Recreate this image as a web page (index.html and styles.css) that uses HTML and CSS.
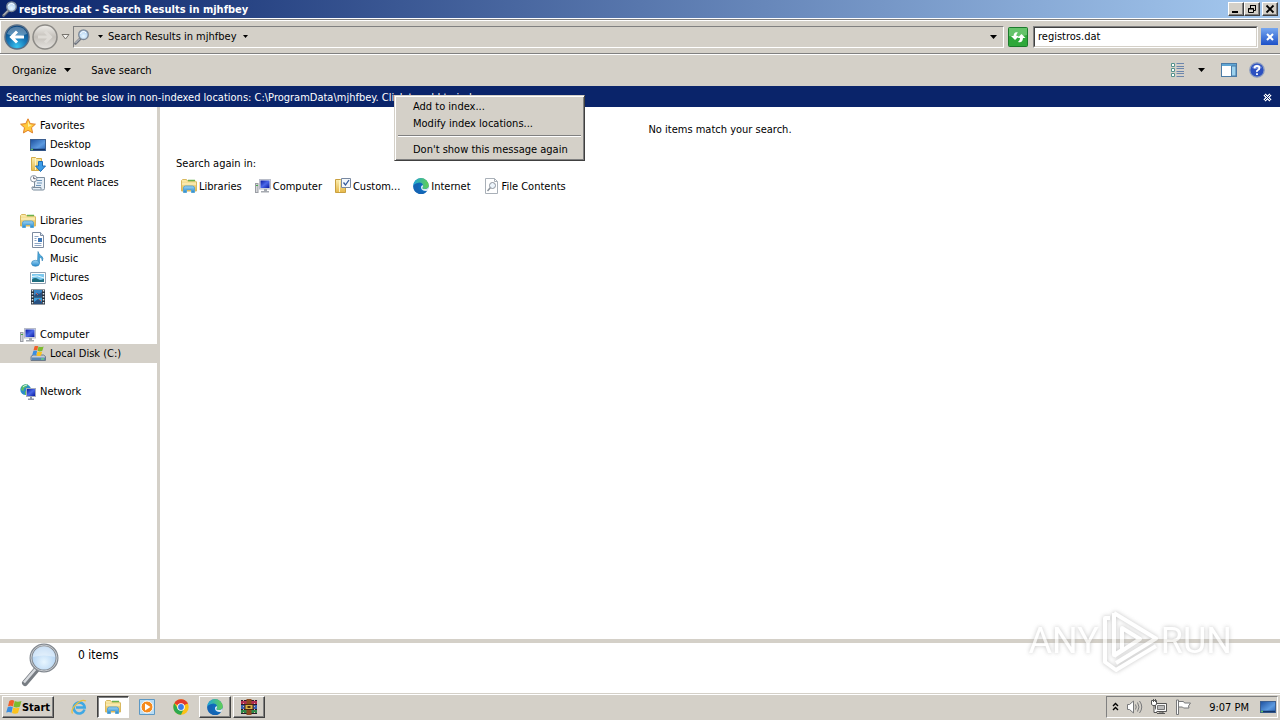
FILE: index.html
```
<!DOCTYPE html>
<html lang="en">
<head>
    <meta charset="UTF-8">
    <meta name="viewport" content="width=device-width, initial-scale=1.0">
    <title>registros.dat - Search Results in mjhfbey</title>
    <link rel="stylesheet" href="styles.css">
</head>
<body>
    <!-- icons used more than once -->
    <svg class="defs" width="0" height="0" aria-hidden="true">
        <defs>
            <linearGradient id="gFolder" x1="0" y1="0" x2="0" y2="1"><stop offset="0" stop-color="#fbeeb0"/><stop offset="1" stop-color="#e6b84a"/></linearGradient>
            <linearGradient id="gBlue" x1="0" y1="0" x2="0" y2="1"><stop offset="0" stop-color="#9ed4f4"/><stop offset="1" stop-color="#2388cc"/></linearGradient>
            <linearGradient id="gScreen" x1="0" y1="0" x2="1" y2="1"><stop offset="0" stop-color="#0818a0"/><stop offset=".5" stop-color="#4a68e8"/><stop offset="1" stop-color="#0818a0"/></linearGradient>
            <linearGradient id="gDesk" x1="0" y1="0" x2="1" y2="1"><stop offset="0" stop-color="#1c4f9e"/><stop offset=".6" stop-color="#5c9ae0"/><stop offset="1" stop-color="#2860b0"/></linearGradient>
            <linearGradient id="gEdge" x1="0" y1="0" x2="1" y2="0"><stop offset="0" stop-color="#1ea4dc"/><stop offset="1" stop-color="#62d050"/></linearGradient>
            <radialGradient id="gLens" cx=".5" cy=".65" r=".6"><stop offset="0" stop-color="#e8f6ff"/><stop offset="1" stop-color="#a8ccf0"/></radialGradient>
            <radialGradient id="gBack" cx=".5" cy=".9" r=".8"><stop offset="0" stop-color="#38c4f0"/><stop offset=".5" stop-color="#1878b8"/><stop offset="1" stop-color="#0c4880"/></radialGradient>
            <linearGradient id="gFwd" x1="0" y1="0" x2="0" y2="1"><stop offset="0" stop-color="#f0eeea"/><stop offset=".5" stop-color="#c4c0ba"/><stop offset="1" stop-color="#e6e4e0"/></linearGradient>
        </defs>
        <symbol id="lens" viewBox="0 0 16 16">
            <path d="M6.500 9.500L1.500 14.500" stroke="#70757e" stroke-width="2.600" stroke-linecap="round"/>
            <path d="M6 9.500L1.500 14" stroke="#d0d4da" stroke-width="1"/>
            <circle cx="9.500" cy="5.700" r="4.800" fill="url(#gLens)" stroke="#7d8896" stroke-width="1.300"/>
            <path d="M6.500 5a3 3 0 0 1 5.500-1" fill="none" stroke="#fff"/>
        </symbol>
        <symbol id="libraries" viewBox="0 0 16 16">
            <path d="M.5 13V2.500l1-1h4l1 1.500h8l1 1V13z" fill="url(#gFolder)" stroke="#d8b860"/>
            <path d="M7 2.500h7" stroke="#6bb04c" stroke-width="1.500"/>
            <path d="M1 6h14" stroke="#fff7cf"/>
            <path d="M2.500 14.500V10q0-2 2-2h7q2 0 2 2v4.500h-3V11.500h-5v3z" fill="url(#gBlue)" stroke="#58a4d4"/>
        </symbol>
        <symbol id="computer" viewBox="0 0 16 16">
            <rect x=".5" y="5.500" width="2.500" height="9" fill="#d4d6da" stroke="#9a9da4"/>
            <path d="M1 7.500h2" stroke="#48a848"/>
            <rect x="4.500" y="1.500" width="11" height="9.500" fill="#dfe3ea" stroke="#b8bcc8"/>
            <rect x="5.500" y="2.500" width="9" height="7.500" fill="url(#gScreen)"/>
            <path d="M9 11h3v2h2v1.500H6V13h3z" fill="#a5a9b0"/>
        </symbol>
        <symbol id="desktop" viewBox="0 0 16 16">
            <rect x=".5" y="2.500" width="15" height="11" fill="url(#gDesk)" stroke="#3c5f90"/>
            <path d="M1 12.500h14" stroke="#123468" stroke-width="1.500"/>
            <path d="M1 12.500h2" stroke="#60c060" stroke-width="1.500"/>
        </symbol>
        <symbol id="edge" viewBox="0 0 16 16">
            <circle cx="8" cy="8" r="7.700" fill="#0f6cbd"/>
            <path d="M.3 8A7.700 7.700 0 0 1 15.700 7.500c0 2.500-2 3.500-4 3.500-2 0-3-.8-2-1.800C11 6 8 4.200 5.500 4.700 2.800 5 1 6.500.3 8z" fill="url(#gEdge)"/>
            <path d="M.3 8C1 6 4 4.700 6.500 6c-2.500 2-1.500 6.500 2.500 7.800 2 .6 4 0 5.300-1A7.700 7.700 0 0 1 .3 8z" fill="#1464b4"/>
            <path d="M9.700 9.200c-1 1 0 1.800 2 1.800 1.500 0 3-.5 3.800-1.800q0 2-1.200 3.500c-3 1-6.300-.7-6.300-3.200 0-1.500 1-2.500 1.900-2.200q.5.900-.2 1.900z" fill="#fff" fill-opacity=".85"/>
        </symbol>
        <symbol id="flag" viewBox="0 0 16 16">
            <path d="M3.300 2Q6 0 8.200 1.800L7 7.400Q5 6 2 7.200z" fill="#f0602a"/>
            <path d="M8.700 2Q11.500 3.600 15.500 2l-1.700 5.700Q10 9.300 7.500 7.700z" fill="#7cbb2e"/>
            <path d="M1.800 8Q4.800 6.800 6.800 8.200l-1.300 5.600Q3.300 12.300.2 13.500z" fill="#3a8ee0"/>
            <path d="M7.300 8.500q2.500 1.500 6.300 0l-1.600 5.600q-3 1.400-6-.1z" fill="#fbc21c"/>
        </symbol>
        <symbol id="down" viewBox="0 0 7 4"><path d="M0 0h7L3.500 4z" fill="currentColor"/></symbol>
    </svg>

    <header class="titlebar">
        <svg class="icon"><use href="#lens"/></svg>
        <h1>registros.dat - Search Results in mjhfbey</h1>
        <div class="window-buttons">
            <button aria-label="Minimize"><svg width="10" height="10"><path d="M1 8h6" stroke="#000" stroke-width="2"/></svg></button>
            <button aria-label="Restore"><svg width="10" height="10" fill="none" stroke="#000"><path d="M3.500 4V1.500h5v5H7M3 1.500h6M1.500 4.500h5v4h-5zM1 5h6"/></svg></button>
            <button class="close" aria-label="Close"><svg width="10" height="10"><path d="M1.500 1.500l7 7M8.500 1.500l-7 7" stroke="#000" stroke-width="1.800"/></svg></button>
        </div>
    </header>

    <nav class="navbar">
        <button class="round" aria-label="Back">
            <svg width="26" height="26" viewBox="0 0 26 26"><circle cx="13" cy="13" r="12" fill="url(#gBack)" stroke="#5a6f86" stroke-width="1.500"/><path d="M3 10a10.500 10.500 0 0 1 20 0q-10 4-20 0z" fill="#fff" opacity=".3"/><path d="M20 13H8M13 7.500L7.500 13l5.500 5.500" fill="none" stroke="#fff" stroke-width="3"/></svg>
        </button>
        <button class="round" aria-label="Forward">
            <svg width="26" height="26" viewBox="0 0 26 26"><circle cx="13" cy="13" r="12" fill="url(#gFwd)" stroke="#8c8a86" stroke-width="1.500"/><path d="M6 13h12M13 7.500l5.500 5.500-5.500 5.500" fill="none" stroke="#dedbd6" stroke-width="3"/></svg>
        </button>
        <button class="history" aria-label="Recent pages"><svg width="9" height="6"><path d="M1 .5h7L4.500 5z" fill="#f4f2ee" stroke="#77746e"/></svg></button>
        <div class="address">
            <svg class="icon"><use href="#lens"/></svg>
            <button aria-label="Locations"><svg class="arrow"><use href="#down"/></svg></button>
            <button class="crumb">Search Results in mjhfbey <svg class="arrow"><use href="#down"/></svg></button>
            <button class="previous" aria-label="Previous locations"><svg class="arrow-big"><use href="#down"/></svg></button>
        </div>
        <button class="refresh" aria-label="Refresh">
            <svg width="20" height="20" viewBox="0 0 20 20"><rect x=".5" y=".5" width="19" height="19" rx="1" fill="#2fa83a" stroke="#1c7a2c"/><path d="M1 1h18v7Q10 11 1 9z" fill="#8ad68a" opacity=".6"/><path d="M10 5.500Q6 4 5.500 9H3l4 4 4-4H8.500Q8 7 10 5.500z" fill="#fff"/><path d="M10 15q4.500 1.500 5-4h2.500l-4-4-4 4H12q.3 2.500-2 4z" fill="#fff"/></svg>
        </button>
        <div class="search">
            <input type="text" value="registros.dat" aria-label="Search">
        </div>
        <button class="clear" aria-label="Clear search"><svg width="10" height="10"><path d="M2 2l6 6M8 2L2 8" stroke="#fff" stroke-width="2"/></svg></button>
    </nav>

    <div class="toolbar">
        <button>Organize <svg class="arrow-big"><use href="#down"/></svg></button>
        <button>Save search</button>
        <div class="view-buttons">
            <button aria-label="Change your view"><svg width="16" height="16" fill="none"><path d="M1.500 1.500h3v3h-3zM1.500 6.500h3v3h-3zM1.500 11.500h3v3h-3z" fill="#fff" stroke="#54928c"/><path d="M6.500 1.500H14M6.500 4.500H14M6.500 6.500H14M6.500 9.500H14M6.500 11.500H14M6.500 14.500H14" stroke="#6c86ac"/></svg></button>
            <button aria-label="More views"><svg class="arrow-big"><use href="#down"/></svg></button>
            <button class="preview" aria-label="Show the preview pane"><svg width="16" height="16"><rect x=".5" y="1.500" width="15" height="13" fill="#fff" stroke="#4b7ba6"/><path d="M1 3h14" stroke="#5fa6d4" stroke-width="2"/><path d="M10.500 4h4.500v10h-4.500z" fill="#9cd2ee" stroke="#4b7ba6"/></svg></button>
            <button aria-label="Get help"><svg width="16" height="16"><circle cx="8" cy="8" r="7.200" fill="#2c50c0" stroke="#8b9cc0" stroke-width="1.300"/><path d="M3 6a5.500 5.500 0 0 1 10 0q-5 2-10 0z" fill="#a8bcf0" opacity=".5"/><path d="M5.500 6.300Q5.700 4 8 4t2.400 2Q10.500 7.300 9 8T8 10M8 11.200v1.700" fill="none" stroke="#fff" stroke-width="1.800"/></svg></button>
        </div>
    </div>

    <div class="infobar">
        <a href="#index">Searches might be slow in non-indexed locations: C:\ProgramData\mjhfbey. Click to add to index...</a>
        <button aria-label="Close message"><svg width="9" height="9" viewBox="0 0 9 9"><path d="M1.500 1.500l6 6M7.500 1.500l-6 6" stroke="#fff" stroke-width="3"/><path d="M1.500 1.500l6 6M7.500 1.500l-6 6" stroke="#0a246a" stroke-width="1"/></svg></button>
        <div class="menu" role="menu">
            <button role="menuitem">Add to index...</button>
            <button role="menuitem">Modify index locations...</button>
            <hr>
            <button role="menuitem">Don't show this message again</button>
        </div>
    </div>

    <div class="content">
        <aside class="sidebar">
            <ul>
                <li><a href="#favorites"><svg class="icon" viewBox="0 0 16 16"><path d="M8 .8l2.200 4.800 5.200.6-3.900 3.500 1.100 5.200L8 12.300l-4.600 2.600 1.100-5.200L.6 6.200l5.200-.6z" fill="#ffc93c" stroke="#e0812a"/><path d="M8 3l1.300 3.500L12 7 8 9z" fill="#fff2a0"/></svg>Favorites</a></li>
                <li class="sub"><a href="#desktop"><svg class="icon"><use href="#desktop"/></svg>Desktop</a></li>
                <li class="sub"><a href="#downloads"><svg class="icon" viewBox="0 0 16 16"><path d="M1.500 14.500V1.500h4l1 1h5v12z" fill="url(#gFolder)" stroke="#d4ac48"/><path d="M5.500 2v12" stroke="#fff4c4"/><path d="M8.500 5.500h4v4.500h3l-5 5.500-5-5.500h3z" fill="#3c9ce8" stroke="#1e6cb4"/></svg>Downloads</a></li>
                <li class="sub"><a href="#recent"><svg class="icon" viewBox="0 0 16 16"><path d="M4.500 2.500h10v11q0 1.500-1.500 1.500H3.500Q2 15 2 13v-1h2.500z" fill="#e4edf5" stroke="#7b8c9c"/><path d="M7 5.500h5M7 8h5M6 10.500h5" stroke="#6d94b8"/><path d="M3 12.500h8v2" fill="none" stroke="#7b8c9c"/><circle cx="3.700" cy="3.700" r="3.200" fill="#fff" stroke="#8794a2"/><path d="M3.700 1.500v2.200h2" fill="none" stroke="#556"/></svg>Recent Places</a></li>
            </ul>
            <ul>
                <li><a href="#libraries"><svg class="icon"><use href="#libraries"/></svg>Libraries</a></li>
                <li class="sub"><a href="#documents"><svg class="icon" viewBox="0 0 16 16"><path d="M2.500.5h8l3 3v12h-11z" fill="#fff" stroke="#7d8ba0"/><path d="M10.500.5v3h3" fill="#d8e2ee" stroke="#7d8ba0"/><path d="M4.500 4.500h4M4.500 6.500h2M4.500 8.500h2M4.500 11.500h7M4.500 13.500h7" stroke="#8fa6c4"/><path d="M8 6h4v4H8z" fill="#3f78b8"/></svg>Documents</a></li>
                <li class="sub"><a href="#music"><svg class="icon" viewBox="0 0 16 16"><path d="M8 .5q1 3.500 3.500 4.500 2.500 2 .8 5Q12.500 7 9.500 6v6h-2z" fill="#4aa8dc" stroke="#2d7fb4" stroke-width=".6"/><ellipse cx="5.500" cy="12.300" rx="4" ry="3" fill="url(#gBlue)" stroke="#2d7fb4" stroke-width=".6"/></svg>Music</a></li>
                <li class="sub"><a href="#pictures"><svg class="icon" viewBox="0 0 16 16"><path d="M.5 2.500h15v11H.5z" fill="#fff" stroke="#92a2b2"/><path d="M2 4h12v8H2z" fill="#7cc8ee"/><path d="M2 9.500Q5 7 8 9t6-.5V12H2z" fill="#1f6f80"/><path d="M2 6.500q5-2 12 1.500" fill="none" stroke="#e6f7fd"/></svg>Pictures</a></li>
                <li class="sub"><a href="#videos"><svg class="icon" viewBox="0 0 16 16"><path d="M1 .5h14v15H1z" fill="#26303c"/><path d="M4 1h8v6.500H4z" fill="#3984c4"/><path d="M4 8.500h8V15H4z" fill="#3c9cd8"/><path d="M4 7q3-4 5-2l3-2v4.500H4zM4 13l4-3 4 3v2H4z" fill="#285080"/><path d="M2.500 1v14M13.500 1v14" stroke="#dfe6ec" stroke-width="1.500" stroke-dasharray="1.500 1.500"/><path d="M6 4l2 2M9 10l2 2" stroke="#c86060"/></svg>Videos</a></li>
            </ul>
            <ul>
                <li><a href="#computer"><svg class="icon"><use href="#computer"/></svg>Computer</a></li>
                <li class="sub selected"><a href="#disk"><svg class="icon" viewBox="0 0 16 16"><path d="M1 10.500l2-1.500h10.500l2 1.500v4H1z" fill="#c4ccd6" stroke="#6d7a8a"/><path d="M1.500 11.500h13.500v2.500H1.500z" fill="#5a87b4"/><path d="M11 13h3" stroke="#6cf06c"/><svg x="2" y="-1" width="12" height="12"><use href="#flag"/></svg></svg>Local Disk (C:)</a></li>
            </ul>
            <ul>
                <li><a href="#network"><svg class="icon" viewBox="0 0 16 16"><circle cx="5.700" cy="5.700" r="5.400" fill="#2c8cc8"/><path d="M2 2q3-2.500 6-1.500L6.500 3 4 4 3.500 7 1 6zM5 7l3 1-1 3H5z" fill="#5cc060"/><path d="M3 3q2-2 4-2" stroke="#c9f0ff" fill="none"/><rect x="6.500" y="4.500" width="9" height="8" fill="#dfe3ea" stroke="#a5acbc"/><path d="M7 5h8v7H7z" fill="url(#gScreen)"/><path d="M10 13h2v1.500h2V16H8v-1.500h2z" fill="#9098a8"/></svg>Network</a></li>
            </ul>
        </aside>
        <main class="results">
            <p class="empty">No items match your search.</p>
            <p>Search again in:</p>
            <div class="again">
                <a href="#libraries"><svg class="icon"><use href="#libraries"/></svg>Libraries</a>
                <a href="#computer"><svg class="icon"><use href="#computer"/></svg>Computer</a>
                <a href="#custom"><svg class="icon" viewBox="0 0 16 16"><path d="M.5 14.500V1.500h5l1 1h4v12z" fill="url(#gFolder)" stroke="#c9a040"/><path d="M4.500 2v12" stroke="#fff4c4"/><path d="M6.500.5h9v9h-9z" fill="#f4f8fc" stroke="#7888a0"/><path d="M8.500 4.500l2 2.500 3.500-5" fill="none" stroke="#345a9c" stroke-width="1.300"/></svg>Custom...</a>
                <a href="#internet"><svg class="icon"><use href="#edge"/></svg>Internet</a>
                <a href="#contents"><svg class="icon" viewBox="0 0 16 16"><path d="M1.500.5h9l3 3v12h-12z" fill="#fff" stroke="#a9b0b8"/><path d="M10.500.5v3h3" fill="none" stroke="#a9b0b8"/><path d="M6.500 9.500l-3 3.500" stroke="#8c939c" stroke-width="1.500"/><circle cx="8.500" cy="7.500" r="3" fill="#edf5fc" stroke="#8c939c"/></svg>File Contents</a>
            </div>
        </main>
    </div>

    <footer class="details">
        <svg width="40" height="44" viewBox="0 0 40 44">
            <path d="M17 26L5 40" stroke="#777c82" stroke-width="6" stroke-linecap="round"/>
            <path d="M16 25.500L4 39.500" stroke="#d8dbdf" stroke-width="2.500"/>
            <circle cx="24" cy="15" r="13" fill="url(#gLens)" stroke="#81878e" stroke-width="3"/>
            <circle cx="24" cy="15" r="13" fill="none" stroke="#c8ccd1" stroke-width="1"/>
            <path d="M13 14a11 11 0 0 1 22 0q-11-3-22 0z" fill="#fff" opacity=".4"/>
        </svg>
        <span>0 items</span>
    </footer>

    <div class="taskbar">
        <button class="start"><svg width="16" height="16"><use href="#flag"/></svg>Start</button>
        <div class="tasks">
            <button aria-label="Internet Explorer"><svg class="icon" viewBox="0 0 16 16"><path d="M13.500 10.500A5.500 5.500 0 1 1 13.700 8.500H5" fill="none" stroke="#3fa8e4" stroke-width="2.600"/><path d="M1.500 14.500Q-.5 11 5 5.500T15 2" fill="none" stroke="#ecc03c" stroke-width="1.300"/></svg></button>
            <button class="active" aria-label="Windows Explorer"><svg class="icon"><use href="#libraries"/></svg></button>
            <button aria-label="Media Player"><svg class="icon" viewBox="0 0 16 16"><path d="M.5.5h15v15H.5z" fill="#b8dcf4" stroke="#5c98c4"/><circle cx="8" cy="8" r="6" fill="#f58a1c" stroke="#fff"/><path d="M6 4.500L11.500 8 6 11.500z" fill="#fff"/></svg></button>
            <button aria-label="Chrome"><svg class="icon" viewBox="0 0 16 16"><circle cx="8" cy="8" r="7.700" fill="#fbc116"/><path d="M8 8L1.300 4.200A7.700 7.700 0 0 1 14.700 4.200z" fill="#e33b2e"/><path d="M1.300 4.200A7.700 7.700 0 0 0 8 15.700L11 9.500 5 9.700z" fill="#2da94f"/><path d="M8 4.200h6.700" stroke="#e33b2e"/><circle cx="8" cy="8" r="3.800" fill="#fff"/><circle cx="8" cy="8" r="2.900" fill="#3b7de8"/></svg></button>
            <button class="open" aria-label="Edge"><svg class="icon"><use href="#edge"/></svg></button>
            <button class="open" aria-label="WinRAR"><svg class="icon" viewBox="0 0 16 16"><path d="M0 1h16v4.500H0z" fill="#b02c50"/><path d="M0 5.500h16v4.500H0z" fill="#3460b0"/><path d="M0 10h16v5H0z" fill="#2e8848"/><path d="M0 1.500h16M0 5.500h16M0 10.500h16M0 14.500h16" stroke="#271a28"/><path d="M5.500 0h5v16h-5z" fill="#8c4a20"/><path d="M4 5.500h8v5H4z" fill="#d8b048" stroke="#4a2a14"/><path d="M6.500 8h3" stroke="#503010" stroke-width="2"/><path d="M2.500 1v14M13.500 1v14" stroke="#e4b4a0" stroke-dasharray="1 2"/></svg></button>
        </div>
        <div class="tray">
            <button aria-label="Show hidden icons"><svg width="7" height="10" fill="none" stroke="#000"><path d="M1 4l2.500-2.500L6 4M1 8l2.500-2.500L6 8" stroke-width="1.400"/></svg></button>
            <button aria-label="Volume"><svg class="icon" viewBox="0 0 16 16" fill="none" stroke="#77787a"><path d="M.5 5.500h2L6.500 2v12l-4-3.500h-2z" fill="#fff"/><path d="M8.500 5.500q1.500 2.500 0 5M10.500 3.500q3 4.500 0 9M12.500 2q4.500 6 0 12"/></svg></button>
            <button aria-label="Network"><svg class="icon" viewBox="0 0 16 16"><path d="M4.500 4.500h11v8h-11z" fill="#f8f8f8" stroke="#555"/><path d="M6.500 6.500h7v4h-7z" fill="#bbb" stroke="#777"/><path d="M8 13h4v1.500h2M6 14.500h8" fill="none" stroke="#555"/><path d="M.5 1.500h5v4l-1.500 1H2L.5 5.500zM3 7v6.500h3" fill="#fff" stroke="#555"/><path d="M2.500 0v3M4.500 0v3" stroke="#555"/></svg></button>
            <button aria-label="Action Center"><svg class="icon" viewBox="0 0 16 16"><path d="M3.500 2.500h5l1 1.500h6l-2 3 .5 2H8.500l-1-1h-4" fill="#fff" stroke="#77787a"/><path d="M1.500 1h2v14.500h-2z" fill="#fff" stroke="#77787a"/></svg></button>
            <time>9:07 PM</time>
            <button aria-label="Show desktop"><svg class="icon"><use href="#desktop"/></svg></button>
        </div>
    </div>

    <div class="watermark">
        <span>ANY</span>
        <svg width="56" height="64" viewBox="0 0 56 64" fill="none" stroke="#fff" stroke-width="4" stroke-linejoin="round"><path d="M12 4v42l8-5V19l18 11-26 17M12 4l42 25.500L14 54M8 9H3v44l11 8 40-24"/></svg>
        <span>RUN</span>
    </div>
</body>
</html>
```
FILE: styles.css
```
body {
    margin: 0;
    min-height: 100vh;
    display: flex;
    flex-direction: column;
    position: relative;
    background: #fff;
    color: #000;
    font-family: "DejaVu Sans Condensed", "Noto Sans", sans-serif;
    font-size: 11px;
    line-height: 15px;
}
button {
    display: flex;
    align-items: center;
    justify-content: center;
    padding: 0;
    border: none;
    background: none;
    color: inherit;
    font: inherit;
    white-space: nowrap;
}
a {
    color: inherit;
    text-decoration: none;
}
p, h1, ul {
    margin: 0;
    padding: 0;
}
svg {
    flex: none;
}
.defs {
    position: absolute;
}
.icon {
    width: 16px;
    height: 16px;
}
.arrow {
    width: 5px;
    height: 3px;
}
.arrow-big {
    width: 7px;
    height: 4px;
}

/* window frame */
.titlebar {
    display: flex;
    align-items: center;
    height: 18px;
    padding: 0 2px;
    gap: 1px;
    background: linear-gradient(to right, #0a246a, #a6caf0);
    color: #fff;
}
.titlebar h1 {
    flex: 1;
    font-size: 11px;
    font-weight: bold;
}
.window-buttons {
    display: flex;
}
.window-buttons button,
.start,
.tasks .open {
    background: #d4d0c8;
    border: 1px solid;
    border-color: #fff #404040 #404040 #fff;
    box-shadow: inset -1px -1px #808080;
}
.window-buttons button {
    width: 16px;
    height: 14px;
}
.window-buttons .close {
    margin-left: 2px;
}
.navbar {
    display: flex;
    align-items: center;
    height: 33px;
    margin-top: 1px;
    padding: 0 2px 0 3px;
    background: #d4d0c8;
    border: 1px solid #808080;
    border-width: 1px 0;
    box-shadow: inset 1px 1px #fff, 0 1px #fff;
}
.round {
    width: 28px;
}
.history {
    width: 12px;
    margin-right: 2px;
}
.address {
    display: flex;
    flex: 1;
    align-items: center;
    height: 20px;
    gap: 8px;
    border: 1px solid;
    border-color: #808080 #fff #fff #808080;
}
.crumb {
    margin-left: -3px;
    gap: 6px;
}
.previous {
    margin: 0 6px 0 auto;
}
.refresh {
    margin: 0 5px 0 4px;
}
.search {
    width: 225px;
    box-sizing: border-box;
    border: 1px solid;
    border-color: #808080 #fff #fff #808080;
}
.search input {
    display: block;
    width: 100%;
    height: 20px;
    box-sizing: border-box;
    padding: 0 3px;
    border: 1px solid;
    border-color: #404040 #d4d0c8 #d4d0c8 #404040;
    background: #fff;
    font: inherit;
}
.clear {
    width: 17px;
    height: 17px;
    margin-left: 3px;
    background: linear-gradient(#78a8f0, #1c50c8);
}
.toolbar {
    display: flex;
    align-items: center;
    height: 30px;
    margin-top: 1px;
    padding: 0 15px 1px 12px;
    gap: 20px;
    background: #d4d0c8;
}
.toolbar button {
    gap: 8px;
}
.view-buttons {
    display: flex;
    margin-left: auto;
    gap: 12px;
}
.view-buttons .preview {
    margin-left: 4px;
}
.infobar {
    position: relative;
    display: flex;
    align-items: center;
    justify-content: space-between;
    height: 20px;
    padding: 1px 8px 0 6px;
    background: #0a246a;
    color: #fff;
}

/* popup over the info bar */
.menu {
    position: absolute;
    left: 394px;
    top: 9px;
    z-index: 1;
    width: 191px;
    box-sizing: border-box;
    padding: 2px;
    background: #d4d0c8;
    color: #000;
    border: 1px solid;
    border-color: #d4d0c8 #404040 #404040 #d4d0c8;
    box-shadow: inset 1px 1px #fff, inset -1px -1px #808080;
}
.menu button {
    width: 100%;
    height: 17px;
    padding-left: 16px;
    justify-content: flex-start;
}
.menu hr {
    margin: 3px 1px 4px;
    border: 1px solid;
    border-width: 1px 0;
    border-color: #808080 transparent #fff;
}

/* panes */
.content {
    display: flex;
    flex: 1;
}
.sidebar {
    width: 157px;
    padding: 9px 0;
    border-right: 3px solid #d4d0c8;
}
.sidebar ul {
    margin-bottom: 19px;
    list-style: none;
}
.sidebar a {
    display: flex;
    align-items: center;
    height: 19px;
    gap: 4px;
    padding-left: 20px;
}
.sidebar .sub a {
    padding-left: 30px;
}
.sidebar .selected {
    background: #d4d0c8;
}
.results {
    flex: 1;
    padding: 15px 4px 14px 16px;
}
.results .empty {
    margin: 0 12px 19px 0;
    text-align: center;
}
.again {
    display: flex;
    gap: 13px;
    padding: 7px 5px;
}
.again a {
    display: flex;
    align-items: center;
    gap: 2px;
}
.details {
    display: flex;
    height: 50px;
    padding-left: 20px;
    gap: 18px;
    border-top: 4px solid #d4d0c8;
}
.details span {
    padding-top: 5px;
    font-size: 12px;
}

/* taskbar */
.taskbar {
    display: flex;
    align-items: center;
    height: 26px;
    padding: 0 2px;
    border-top: 1px solid #d4d0c8;
    box-shadow: inset 0 1px #fff;
    background: #d4d0c8;
}
.start {
    width: 52px;
    height: 22px;
    font-weight: bold;
}
.tasks {
    display: flex;
    gap: 2px;
    margin-left: 9px;
}
.tasks button {
    width: 32px;
    height: 22px;
    box-sizing: border-box;
}
.tasks .active {
    background: #fff;
    border: 1px solid;
    border-color: #404040 #fff #fff #404040;
    box-shadow: inset 1px 1px #808080;
}
.tray {
    display: flex;
    align-items: center;
    height: 20px;
    margin-left: auto;
    padding: 0 1px 0 5px;
    gap: 8px;
    border: 1px solid;
    border-color: #808080 #fff #fff #808080;
}
.tray time {
    padding: 0 3px 0 10px;
}

.watermark {
    position: absolute;
    right: 48px;
    bottom: 47px;
    display: flex;
    align-items: center;
    gap: 3px;
    color: #fff;
    font-family: Roboto, "Liberation Sans", sans-serif;
    font-size: 36px;
    line-height: 64px;
    opacity: 0.7;
    filter: drop-shadow(0 0 2px #aaa);
    pointer-events: none;
}
```
